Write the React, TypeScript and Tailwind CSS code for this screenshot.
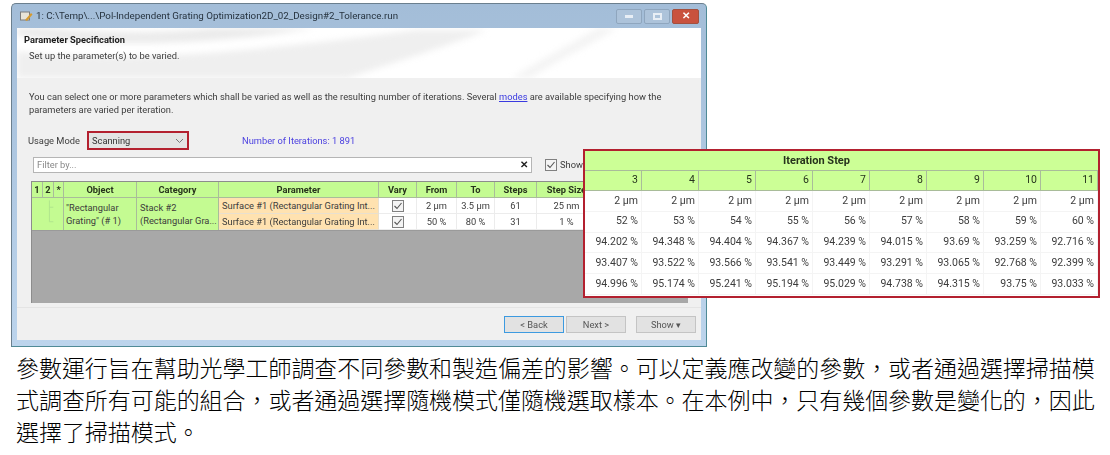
const stepCols = ['3', '4', '5', '6', '7', '8', '9', '10', '11']

const stepRows = [
    ['2 µm', '2 µm', '2 µm', '2 µm', '2 µm', '2 µm', '2 µm', '2 µm', '2 µm'],
    ['52 %', '53 %', '54 %', '55 %', '56 %', '57 %', '58 %', '59 %', '60 %'],
    ['94.202 %', '94.348 %', '94.404 %', '94.367 %', '94.239 %', '94.015 %', '93.69 %', '93.259 %', '92.716 %'],
    ['93.407 %', '93.522 %', '93.566 %', '93.541 %', '93.449 %', '93.291 %', '93.065 %', '92.768 %', '92.399 %'],
    ['94.996 %', '95.174 %', '95.241 %', '95.194 %', '95.029 %', '94.738 %', '94.315 %', '93.75 %', '93.033 %'],
]

const paramRows = [
    ['2 µm', '3.5 µm', '61', '25 nm'],
    ['50 %', '80 %', '31', '1 %'],
]

const headers = ['Vary', 'From', 'To', 'Steps', 'Step Size']

const CheckBox = () => (
    <svg width="12" height="12" viewBox="0 0 12 12" className="mx-auto">
        <rect x="0.5" y="0.5" width="11" height="11" fill="#f4f4f4" stroke="#808080" />
        <path d="M2.5 6 L5 8.5 L9.5 3" fill="none" stroke="#555" strokeWidth="1.1" />
    </svg>
)

const HeadCell = ({ label }: { label: string }) => (
    <div className="flex items-center justify-center bg-[#c4fb92] border-r border-b border-[#a9bc9a] font-bold text-[#26331c] whitespace-nowrap overflow-hidden">
        {label}
    </div>
)

const ParamTable = () => (
    <div className="mt-[8px] ml-[14px] mr-[13px] h-[122px] bg-[#a8a8a8] border-l border-t border-[#8c8c8c] overflow-hidden">
        <div className="grid grid-cols-[11px_11px_10px_73px_82px_160px_38px_40px_38px_42px_60px] grid-rows-[16px_16px_16px] bg-white border-b border-[#9a9a9a] text-[9.3px] leading-none text-[#3c3c3c]">
            <HeadCell label="1" />
            <HeadCell label="2" />
            <HeadCell label="*" />
            <HeadCell label="Object" />
            <HeadCell label="Category" />
            <HeadCell label="Parameter" />
            {headers.map((h) => <HeadCell key={h} label={h} />)}

            <div className="col-span-3 row-span-2 bg-[#c4fb92] border-r border-[#a9bc9a] flex justify-center">
                <svg width="32" height="32" viewBox="0 0 32 32">
                    <path d="M18 2 V24 M18 9 H22 M18 24 H22" fill="none" stroke="#b0e48c" strokeWidth="1" />
                </svg>
            </div>
            <div className="row-span-2 bg-[#c4fb92] border-r border-[#a9bc9a] px-[2px] flex items-center leading-[13px]">
                <span>"Rectangular<br />Grating" (# 1)</span>
            </div>
            <div className="row-span-2 bg-[#c4fb92] border-r border-[#a9bc9a] px-[3px] flex items-center leading-[13px] overflow-hidden">
                <span>Stack #2<br /><span className="whitespace-nowrap">(Rectangular Gra...</span></span>
            </div>
            {paramRows.map((row, i) => (
                <div key={i} className="contents">
                    <div className="bg-[#ffe2b0] border-r border-b border-[#e8e0d0] px-[3px] flex items-center whitespace-nowrap overflow-hidden">
                        Surface #1 (Rectangular Grating Int...
                    </div>
                    <div className="flex items-center border-r border-b border-[#ececec]"><CheckBox /></div>
                    {row.map((v, j) => (
                        <div key={j} className="flex items-center justify-center border-r border-b border-[#ececec] whitespace-nowrap">{v}</div>
                    ))}
                </div>
            ))}
        </div>
    </div>
)

const StepTable = () => (
    <div className="absolute left-[583px] top-[149px] w-[517px] h-[149px] border-2 border-[#b3202f] bg-white blur-[0.45px] text-[10.5px] leading-none text-[#3c3c3c]" style={{ fontFamily: 'Roboto, sans-serif' }}>
        <div className="h-[20px] flex items-center justify-center pr-[50px] bg-[#ccff96] border-b border-[#a9bc9a] font-bold text-[11px] text-[#26331c]">
            Iteration Step
        </div>
        <div className="grid grid-cols-[repeat(9,57px)] h-[20px] border-b border-[#a9bc9a] bg-[#ccff96] text-[#26331c]">
            {stepCols.map((c) => (
                <div key={c} className="flex items-center justify-end pr-[3px] border-r border-[#a9bc9a]">{c}</div>
            ))}
        </div>
        <div className="grid grid-cols-[repeat(9,57px)] auto-rows-[20.8px]">
            {stepRows.map((row, i) => row.map((v, j) => (
                <div key={`${i}-${j}`} className="flex items-center justify-end pr-[3px] border-r border-b border-[#f4f4f4] whitespace-nowrap">{v}</div>
            )))}
        </div>
    </div>
)

const WinButton = ({ wide, children }: { wide?: boolean; children: React.ReactNode }) => (
    <div className={`${wide ? 'w-[27px] bg-[#c9523e] border-[#a3503f]' : 'w-[26px] bg-[#adc3da] border-[#8fa6be]'} h-[15px] rounded-[2px] border flex items-center justify-center`}>
        {children}
    </div>
)

const ActionButton = ({ label, focus }: { label: string; focus?: boolean }) => (
    <div className={`w-[60px] h-[17px] flex items-center justify-center bg-[#e2e2e2] border text-[#555] ${focus ? 'border-[#3c9ae0]' : 'border-[#c4c4c4]'}`}>
        {label}
    </div>
)

const DialogWindow = () => (
    <div className="ml-[11px] mt-[3px] w-[696px] h-[344px] rounded-t-[5px] border border-[#6b7f8e] border-b-[#4f8a96] border-r-[#4f8a96] bg-gradient-to-b from-[#a3bdd8] to-[#bcd4ec] flex flex-col px-[5px] pb-[6px] blur-[0.45px]" style={{ fontFamily: 'Roboto, sans-serif' }}>
        <div className="h-[24px] shrink-0 flex items-center pr-[2px]">
            <svg width="13" height="11" viewBox="0 0 13 11" className="ml-[3px] mr-[3px]">
                <rect x="0.5" y="1" width="9" height="8" fill="#e8e4d8" stroke="#7c7c7c" />
                <path d="M5 9 L11 2 L12.5 3.5 L7 10 Z" fill="#d69a2e" />
            </svg>
            <span className="text-[9.75px] text-[#26333f] whitespace-nowrap">1: C:\Temp\...\Pol-Independent Grating Optimization2D_02_Design#2_Tolerance.run</span>
            <div className="ml-auto flex gap-[2px]">
                <WinButton><div className="w-[8px] h-[3px] bg-[#e8eef5]" /></WinButton>
                <WinButton><div className="w-[9px] h-[7px] border-2 border-[#e8eef5]" /></WinButton>
                <WinButton wide><span className="text-[10px] font-bold leading-none text-white">✕</span></WinButton>
            </div>
        </div>
        <div className="flex-1 min-h-0 bg-[#f0f0f0] flex flex-col text-[9.3px] leading-none text-[#3c3c3c]">
            <div className="relative h-[50px] shrink-0 bg-white overflow-hidden">
                <svg width="683" height="50" viewBox="0 0 683 50" className="absolute inset-0 blur-[3px]">
                    <path d="M-10 60 V22 C120 38 260 20 400 2 L470 2 C420 22 360 40 300 60 Z" fill="#efefef" />
                    <path d="M-10 6 C100 22 220 16 330 -6 L240 -6 C160 8 70 6 -10 -4 Z" fill="#ebebeb" />
                    <path d="M480 60 C520 32 560 14 590 -6 L610 -6 C570 20 530 36 500 60 Z" fill="#f4f4f4" />
                </svg>
                <div className="relative pt-[7px] pl-[7px] text-[#1c1c1c] font-bold">Parameter Specification</div>
                <div className="relative pt-[7px] pl-[12px]">Set up the parameter(s) to be varied.</div>
            </div>
            <div className="pl-[12px] pt-[12px] leading-[13px]">
                <p className="whitespace-nowrap">You can select one or more parameters which shall be varied as well as the resulting number of iterations. Several <span className="text-[#3a3ae0] underline">modes</span> are available specifying how the</p>
                <p>parameters are varied per iteration.</p>
            </div>
            <div className="flex items-center pl-[11px] mt-[15px] h-[19px]">
                <span className="w-[59px] whitespace-nowrap">Usage Mode</span>
                <div className="w-[102px] h-[19px] border-2 border-[#b3202f] bg-[#e4e4e4] flex items-center justify-between px-[3px] text-[#333]">
                    Scanning
                    <svg width="9" height="6" viewBox="0 0 9 6"><path d="M1 1 L4.5 4.5 L8 1" fill="none" stroke="#777" /></svg>
                </div>
                <span className="ml-[53px] text-[#4a3fe0]">Number of Iterations: 1 891</span>
            </div>
            <div className="flex items-center pl-[16px] mt-[7px] h-[16px]">
                <div className="w-[499px] h-[16px] bg-white border border-[#b5b5b5] flex items-center justify-between pl-[3px] pr-[3px] text-[#888]">
                    Filter by...
                    <span className="text-[#222] font-bold text-[10px] leading-none">✕</span>
                </div>
                <div className="ml-[13px] mr-[3px]"><CheckBox /></div>
                <span>Show</span>
            </div>
            <ParamTable />
            <div className="mt-[4px] mx-0 border-t border-[#e4e4e4] flex-1 flex items-start justify-end pt-[8px] pr-[5px] gap-[2px]">
                <ActionButton label="< Back" focus />
                <ActionButton label="Next >" />
                <div className="w-[6px]" />
                <ActionButton label="Show ▾" />
            </div>
        </div>
    </div>
)

const App = () => {
    return (
        <div className="relative w-[1110px] h-[455px] bg-white overflow-hidden">
            <DialogWindow />
            <StepTable />
            <p className="ml-[16px] mt-[4px] w-[1085px] text-[23px] leading-[32px] tracking-[-0.05px] font-light text-black" style={{ fontFamily: '"Noto Sans CJK TC", sans-serif' }}>
                參數運行旨在幫助光學工師調查不同參數和製造偏差的影響。可以定義應改變的參數，或者通過選擇掃描模式調查所有可能的組合，或者通過選擇隨機模式僅隨機選取樣本。在本例中，只有幾個參數是變化的，因此選擇了掃描模式。
            </p>
        </div>
    )
}

export default App
